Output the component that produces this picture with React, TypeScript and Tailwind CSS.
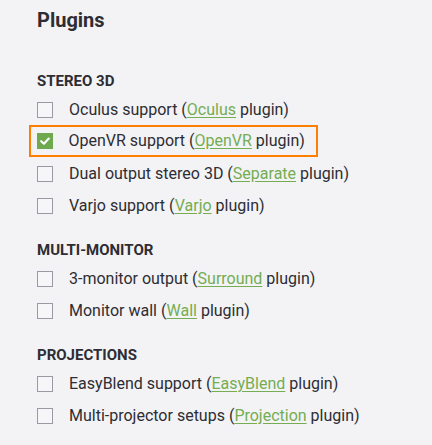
const sections = [
  {
    title: "Stereo 3D",
    items: [
      { label: "Oculus support", link: "Oculus" },
      { label: "OpenVR support", link: "OpenVR", checked: true },
      { label: "Dual output stereo 3D", link: "Separate" },
      { label: "Varjo support", link: "Varjo" },
    ],
  },
  {
    title: "Multi-monitor",
    items: [
      { label: "3-monitor output", link: "Surround" },
      { label: "Monitor wall", link: "Wall" },
    ],
  },
  {
    title: "Projections",
    items: [
      { label: "EasyBlend support", link: "EasyBlend" },
      { label: "Multi-projector setups", link: "Projection" },
    ],
  },
];

function Box({ checked }: { checked?: boolean }) {
  if (checked) {
    return (
      <span className="flex h-4 w-4 shrink-0 items-center justify-center bg-[#6ea94e]">
        <svg viewBox="0 0 16 16" className="h-4 w-4" fill="none" stroke="#fff" strokeWidth="2.2" strokeLinecap="round" strokeLinejoin="round">
          <path d="M4.2 8.2l2.7 2.5L11.8 5.6" />
        </svg>
      </span>
    );
  }
  return <span className="h-4 w-4 shrink-0 border-[1.5px] border-[#9a9aa5] bg-[#f6f6f8]" />;
}

export default function App() {
  return (
    <div className="h-[445px] w-[432px] bg-[#f3f3f6] pl-[37px] pt-[6px] font-['Roboto',sans-serif] text-[#2d2d33]">
      <h1 className="text-[20px] font-bold leading-[28px]">Plugins</h1>
      {sections.map((s, i) => (
        <section key={s.title} className={i === 0 ? "mt-[37px]" : "mt-[18px]"}>
          <h2 className="mb-[3px] text-[15px] font-bold uppercase leading-[20px]">{s.title}</h2>
          {s.items.map((it) =>
            it.checked ? (
              <div
                key={it.label}
                className="-mt-px mb-px -ml-[8px] flex h-[32px] w-fit items-center border-[2.5px] border-[#ff8000] pl-[5.5px] pr-[11px]"
              >
                <Box checked />
                <Label {...it} />
              </div>
            ) : (
              <div key={it.label} className="flex h-[32px] items-center">
                <Box />
                <Label {...it} />
              </div>
            )
          )}
        </section>
      ))}
    </div>
  );
}

function Label({ label, link }: { label: string; link: string }) {
  return (
    <span className="ml-[16px] text-[16px] leading-[20px]">
      {label} (
      <a className="text-[#74ad52] underline decoration-[#74ad52] underline-offset-[2px]">{link}</a> plugin)
    </span>
  );
}
